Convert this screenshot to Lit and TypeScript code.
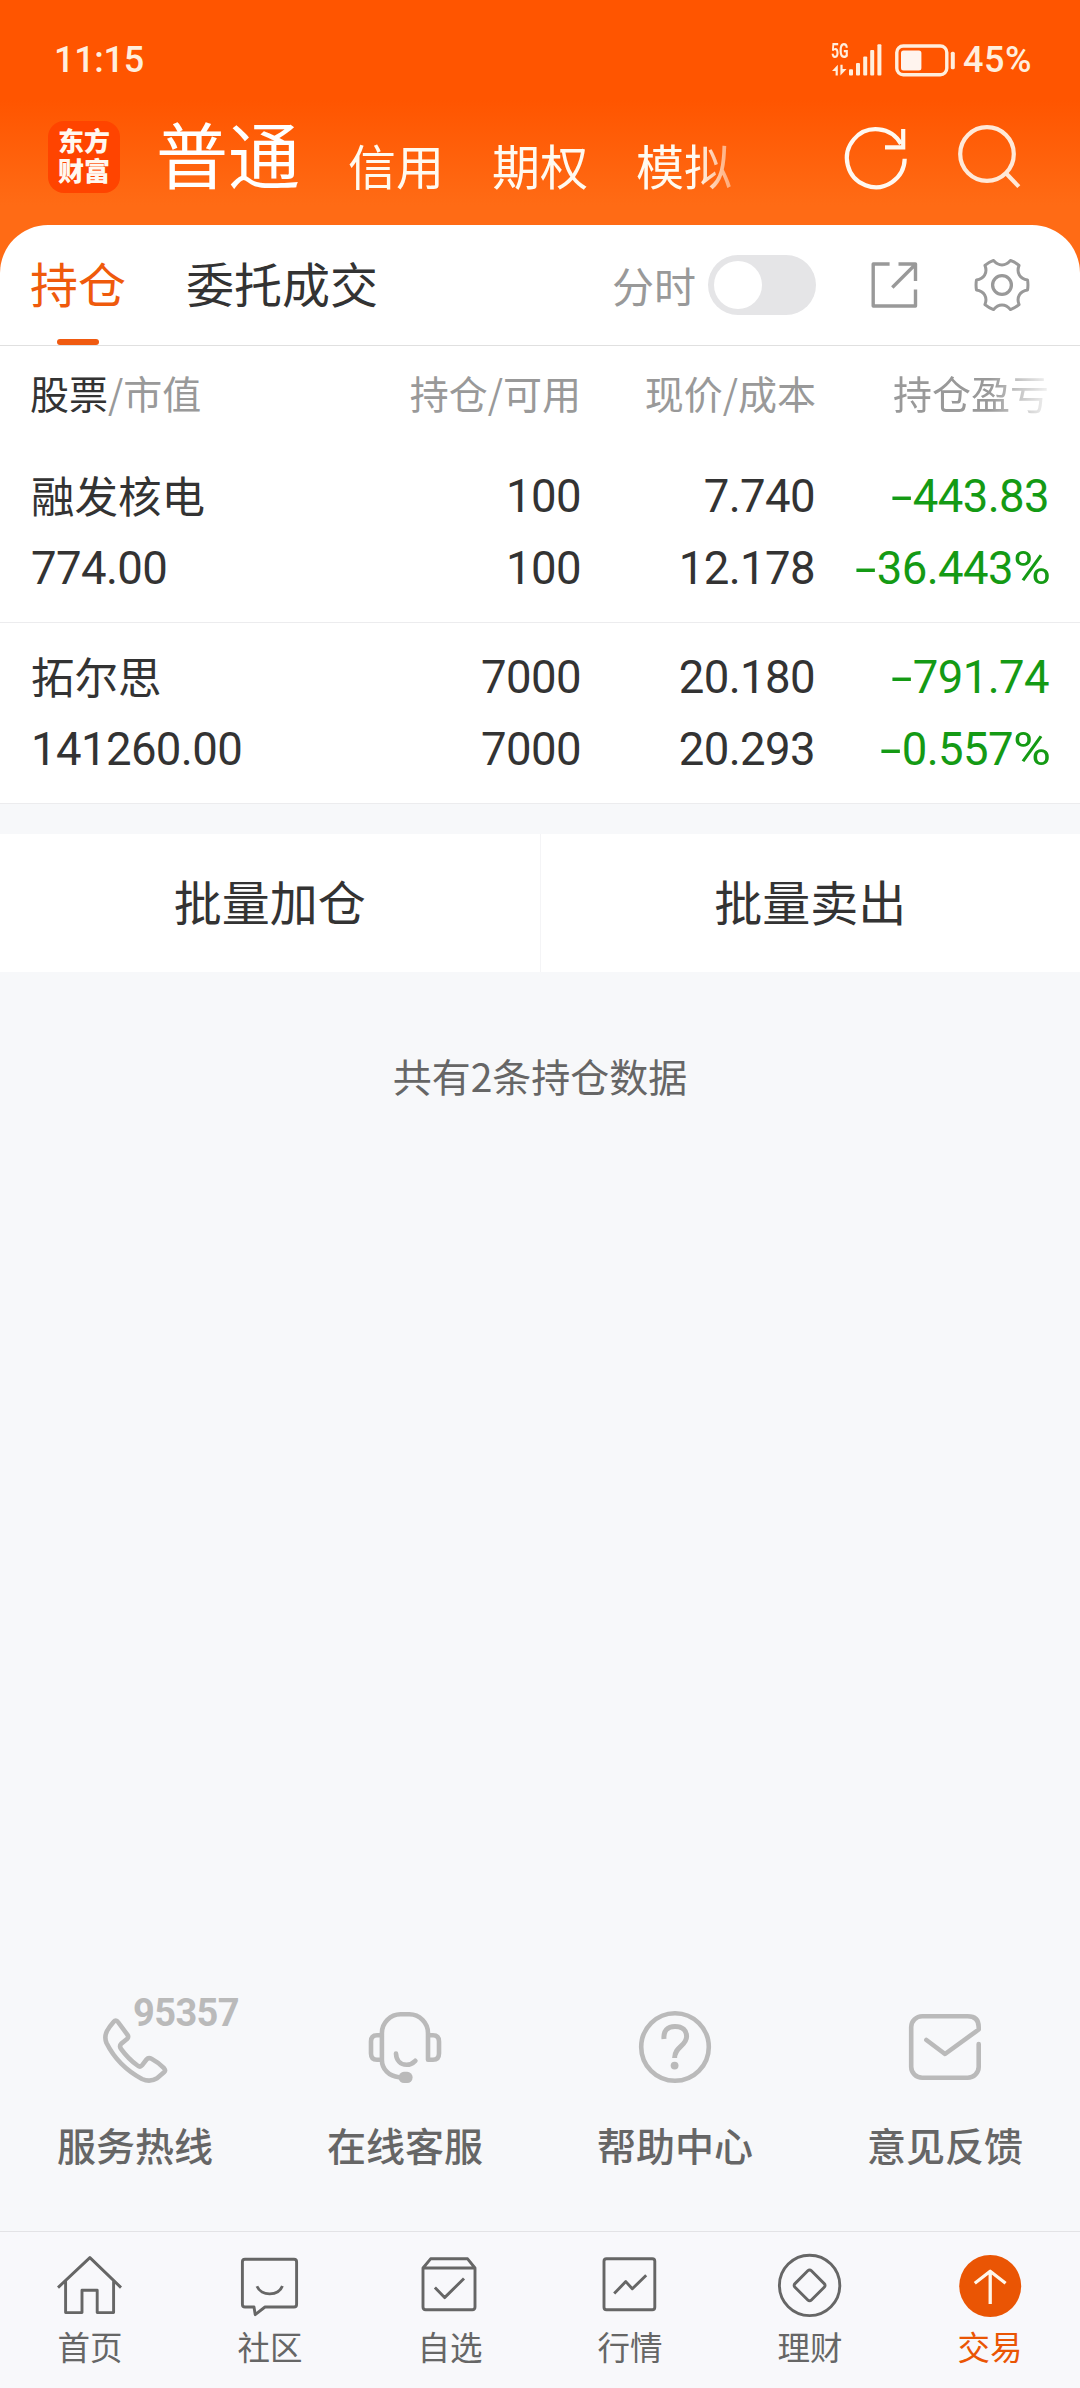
import { LitElement, html, css, svg, TemplateResult } from "lit";
import { customElement, property } from "lit/decorators.js";

interface Holding {
  name: string;
  value: string;
  held: string;
  available: string;
  price: string;
  cost: string;
  profit: string;
  rate: string;
}

const HOLDINGS: Holding[] = [
  { name: "融发核电", value: "774.00", held: "100", available: "100", price: "7.740", cost: "12.178", profit: "-443.83", rate: "-36.443%" },
  { name: "拓尔思", value: "141260.00", held: "7000", available: "7000", price: "20.180", cost: "20.293", profit: "-791.74", rate: "-0.557%" },
];

/** Six-lobed gear outline around a centre point. */
function gearPath(cx: number, cy: number): string {
  const at = (deg: number, r: number) => {
    const a = (deg * Math.PI) / 180;
    return `${(cx + r * Math.cos(a)).toFixed(2)} ${(cy + r * Math.sin(a)).toFixed(2)}`;
  };
  let d = `M${at(-11, 26)}`;
  for (let k = 0; k < 6; k++) {
    const a = k * 60;
    d += `Q${at(a, 26.4)} ${at(a + 11, 26)}`;
    d += `C${at(a + 19, 18.8)} ${at(a + 41, 18.8)} ${at(a + 49, 26)}`;
  }
  return d + "Z";
}

const icons = {
  signal: html`<svg width="54" height="36" viewBox="830 41 54 36" fill="currentColor">
    <path d="M837.8 63.7V74.5H835.6V70H832ZM840.4 74.5V63.7H842.6V68H846.6Z"/>
    <rect x="849" y="68.3" width="4" height="6.2" rx="1"/>
    <rect x="856" y="62" width="4" height="12.5" rx="1"/>
    <rect x="863.2" y="55.4" width="4" height="19.1" rx="1"/>
    <rect x="870.2" y="49" width="4" height="25.5" rx="1"/>
    <rect x="877.4" y="43.3" width="4" height="31.2" rx="1"/>
  </svg>`,
  battery: html`<svg width="64" height="36" viewBox="892 41 64 36" fill="none" stroke="currentColor">
    <rect x="895.8" y="45" width="50" height="28.8" rx="6.5" stroke-width="3.4"/>
    <rect x="900" y="49.5" width="20.4" height="20" rx="2.5" fill="#fff4ee" stroke="none"/>
    <rect x="949.8" y="50.7" width="4" height="17.6" rx="1.6" fill="currentColor" stroke="none"/>
  </svg>`,
  refresh: html`<svg width="72" height="72" viewBox="840 122 72 72" fill="none" stroke="#fff8f0" stroke-width="4.2">
    <path d="M904.7 158.8A28.9 29 0 1 1 901 144"/><path d="M903.2 129V147.3H885"/>
  </svg>`,
  search: html`<svg width="72" height="72" viewBox="953 122 72 72" fill="none" stroke="#ffe9d8" stroke-width="4.2">
    <circle cx="987" cy="154" r="26.8"/><path d="M1006 173.3 1018.8 186.6"/>
  </svg>`,
  share: html`<svg width="54" height="54" viewBox="867 258 54 54" fill="none" stroke="#999" stroke-width="3.4" stroke-linejoin="round">
    <path d="M889.6 264H873.2V306H915.5V289.5M898.5 264H915.5V281M892.3 287.5 914.8 265"/>
  </svg>`,
  gear: html`<svg width="60" height="60" viewBox="972.1 255.3 60 60" fill="none" stroke="#999" stroke-width="3" stroke-linejoin="round">
    <path d=${gearPath(1002.1, 285.3)}/><circle cx="1002.1" cy="285.3" r="9.4" stroke-width="3.3"/>
  </svg>`,
};

const service = (x: number, shapes: TemplateResult) => html`<svg width="80" height="80" viewBox="${x} 2007 80 80" fill="none"
  stroke="#bababa" stroke-width="4.6" stroke-linejoin="round" stroke-linecap="round">${shapes}</svg>`;

const SERVICES = [
  { label: "服务热线", badge: "95357", icon: service(95, svg`<path d="M113.5 2022Q116 2019 118 2022L127.5 2034.8Q129 2037 127 2039L121.3 2043.6Q119 2046 121 2048.8Q128 2058.5 137.5 2065.5Q140.2 2067.6 142 2065.4L146.5 2059.5Q148.5 2057 151.5 2058.8Q158.5 2062.5 164 2068.2Q166 2070.5 164 2072.3L157 2078.3Q150 2082.6 142 2079Q118 2066 106.5 2043Q104 2037 107 2031Q109.5 2026.5 113.5 2022Z"/>` as TemplateResult) },
  { label: "在线客服", badge: "", icon: service(365, svg`<path d="M399 2077.2C389 2076.5 381.9 2069 381.9 2060V2033A18.7 18.7 0 0 1 400.6 2014.3H409.3A18.7 18.7 0 0 1 428 2033V2059.7H433Q439 2059.7 439 2053.5V2041.5Q439 2035.3 433 2035.3H428M381.9 2035.3H377Q371 2035.3 371 2041.5V2053.5Q371 2059.7 377 2059.7H381.9M396 2053.6C396.3 2060.5 400.5 2064.8 406.5 2064.8Q411.5 2064.8 415.3 2060.8"/><rect x="398.6" y="2071.8" width="14" height="11.2" rx="5.4" fill="#bababa" stroke="none"/>` as TemplateResult) },
  { label: "帮助中心", badge: "", icon: service(635, svg`<circle cx="675" cy="2047" r="33.8"/><path stroke-linecap="butt" stroke-width="5" d="M664 2039C663.2 2031 667.5 2026.4 675 2026.4C682.5 2026.4 686.6 2030.5 686.6 2036.5C686.6 2046 674.6 2046.5 674.6 2058"/><circle cx="674.6" cy="2065.6" r="3.9" fill="#bababa" stroke="none"/>` as TemplateResult) },
  { label: "意见反馈", badge: "", icon: service(905, svg`<path d="M978.7 2044V2067A11 11 0 0 1 967.7 2077.8H922.2A11 11 0 0 1 911.2 2067V2027A11 11 0 0 1 922.2 2016.2H967.7Q978.7 2016.2 978.7 2027V2029.5L945 2054L926.4 2040"/>` as TemplateResult) },
];

const nav = (x: number, shapes: TemplateResult) => html`<svg width="70" height="70" viewBox="${x} 2250 70 70" fill="none"
  stroke="#666" stroke-width="2.9" stroke-linejoin="round">${shapes}</svg>`;

const NAV = [
  { label: "首页", active: false, icon: nav(55, svg`<path d="M58 2287.6 89.9 2257.6 121 2287.6M65.6 2281V2312.6H82V2290.3H97.2V2312.6H113.6V2281"/>` as TemplateResult) },
  { label: "社区", active: false, icon: nav(235, svg`<path d="M245 2259.3H294Q296.6 2259.3 296.6 2262V2304.4Q296.6 2307 294 2307H265L255.2 2314.6 254 2307H245Q242.4 2307 242.4 2304.4V2262Q242.4 2259.3 245 2259.3Z"/><path d="M257 2286.3C261 2296.4 278.4 2296.4 282.4 2286"/>` as TemplateResult) },
  { label: "自选", active: false, icon: nav(415, svg`<path d="M423 2268 430.6 2258.8H467.6L475 2268V2307Q475 2309.7 472.3 2309.7H425.7Q423 2309.7 423 2307ZH475M434.9 2287.6 444.6 2297.6 464 2278.5"/>` as TemplateResult) },
  { label: "行情", active: false, icon: nav(595, svg`<rect x="604" y="2258.8" width="50.8" height="50.9" rx="2.5"/><path d="M614.2 2293.5 625.8 2281.6 632.3 2288.8 646.2 2275.3"/>` as TemplateResult) },
  { label: "理财", active: false, icon: nav(775, svg`<circle cx="809.6" cy="2285.4" r="30.2"/><path d="M807.8 2270.8Q809.6 2269 811.4 2270.8L824.2 2283.6Q826 2285.4 824.2 2287.2L811.4 2300Q809.6 2301.8 807.8 2300L795 2287.2Q793.2 2285.4 795 2283.6Z"/>` as TemplateResult) },
  { label: "交易", active: true, icon: nav(955, svg`<circle cx="990.2" cy="2286" r="31" fill="#ea5504" stroke="none"/><path stroke="#fff6ea" stroke-width="3.3" d="M990.2 2304V2271.5M974.8 2283.3 990.2 2271.3 1005.6 2283.3"/>` as TemplateResult) },
];

@customElement("status-bar")
class StatusBar extends LitElement {
  static styles = css`
    :host { display: flex; align-items: center; justify-content: space-between; height: 118px; padding: 1px 48px 0 54px;
      box-sizing: border-box; color: #ffeedd; font: 500 36px/117px Roboto, "Liberation Sans", sans-serif; }
    svg { display: block; }
    .right { display: flex; align-items: center; }
    .cell { display: flex; align-items: center; position: relative; margin-right: 9px; }
    .net { position: absolute; left: 1px; top: 1px; font: 700 19.5px/18px Roboto, sans-serif; transform: scaleX(0.72); transform-origin: 0 0; }
    .battery { display: flex; margin-right: 6px; }
    .time, .percent { padding-top: 1px; }
    .time { letter-spacing: -0.3px; }
    .percent { letter-spacing: 0.5px; }
  `;
  render() {
    return html`<span class="time">11:15</span>
      <div class="right">
        <span class="cell">${icons.signal}<span class="net">5G</span></span>
        <span class="battery">${icons.battery}</span>
        <span class="percent">45%</span>
      </div>`;
  }
}

@customElement("signed-number")
class SignedNumber extends LitElement {
  @property() value = "";
  static styles = css`
    :host { display: inline; }
    .minus { display: inline-block; width: 21.5px; text-align: left; }
    .percent { display: inline-block; width: 36px; text-align: left; }
    .bar { display: inline-block; transform: scaleX(1.7); transform-origin: 0 50%; }
    .wide { display: inline-block; transform: scaleX(1.14); transform-origin: 0 50%; }
  `;
  render() {
    const percent = this.value.endsWith("%");
    const digits = this.value.slice(1, percent ? -1 : undefined);
    return html`<span class="minus"><span class="bar">-</span></span>${digits}${percent ? html`<span class="percent"><span class="wide">%</span></span>` : ""}`;
  }
}

@customElement("app-root")
class AppRoot extends LitElement {
  static styles = css`
    :host { display: block; }
    svg { display: block; flex: none; }
    .screen { display: flex; flex-direction: column; width: 1080px; height: 2388px; overflow: hidden; color: #333;
      font-family: "Noto Sans CJK SC", sans-serif;
      background: #f7f8fa linear-gradient(#ff5500 0, #ff5500 100px, #ff6b15 205px, #ff6b15 280px) 0 0 / 100% 280px no-repeat; }
    .head { display: flex; align-items: center; height: 107px; padding: 0 55px 29px 48px; box-sizing: border-box; }
    .logo { width: 72px; height: 72px; border-radius: 16px; padding: 4px 10px 8px; box-sizing: border-box;
      background: #ff4400; color: #fff8f0; font-size: 26px; font-weight: 900; line-height: 30px; }
    .accounts { display: flex; align-items: flex-start; gap: 48px; width: 604px; height: 84px; margin-left: 36px; color: #fffaf0; font-size: 48px; line-height: 72px; white-space: nowrap;
      margin-top: 2px;
      -webkit-mask-image: linear-gradient(90deg, #000 540px, transparent 604px); mask-image: linear-gradient(90deg, #000 540px, transparent 604px); }
    .account { padding-top: 12px; }
    .account.current { padding-top: 0; font-size: 72px; color: #fff; }
    .tools { display: flex; margin-left: auto; margin-top: 2px; gap: 41px; }
    .sheet { background: #fff; border-radius: 48px 48px 0 0; }
    .tabs { display: flex; align-items: center; height: 121px; box-sizing: border-box; padding: 0 48px 0 30px; border-bottom: 1px solid #e0e0e0; }
    .tab { position: relative; height: 120px; font-size: 48px; line-height: 115px; margin-right: 60px; }
    .tab.on { color: #ef5a0c; }
    .tab.on::after { content: ""; position: absolute; left: 27px; bottom: 0; width: 42px; height: 6px; border-radius: 3px; background: #f05a10; }
    .minute { display: flex; align-items: center; margin-left: auto; color: #999; font-size: 42px; line-height: 116px; }
    .switch { width: 108px; height: 60px; margin-left: 12px; border-radius: 30px; background: #e5e5e7; padding: 6px; box-sizing: border-box; }
    .knob { width: 48px; height: 48px; border-radius: 50%; background: #fff; }
    .share { margin-left: 51px; }
    .gear { margin-left: 51px; }
    .row { display: grid; grid-template-columns: 271px 280px 235px 233px; padding: 0 31px 0 30px; }
    .row > :not(:first-child) { text-align: right; }
    .cols { height: 96px; font-size: 39px; line-height: 92px; color: #999; }
    .cols .strong { color: #333; }
    .fade { -webkit-mask-image: linear-gradient(90deg, #000 173px, rgba(0,0,0,.12) 233px); mask-image: linear-gradient(90deg, #000 173px, rgba(0,0,0,.12) 233px); }
    .row.holding { grid-template-columns: 270px 280px 234px 234px; border-bottom: 1px solid #ececee; padding: 19px 31px 17px 31px; font: 400 45.5px/72px Roboto, "Liberation Sans", sans-serif; letter-spacing: -0.6px; }
    .name { font-family: "Noto Sans CJK SC", sans-serif; font-size: 43.5px; line-height: 67px; height: 72px; letter-spacing: 0; }
    .down { color: #149a14; }
    .batch { display: flex; height: 138px; margin-top: 30px; background: #fff; }
    .action { flex: 1; text-align: center; font-size: 48px; line-height: 132px; }
    .action:first-child { border-right: 1px solid #f4f4f6; }
    .summary { margin-top: 67px; text-align: center; color: #666; font-size: 39px; line-height: 73px; }
    .services { display: grid; grid-template-columns: repeat(4, 270px); margin-top: auto; padding-bottom: 57px; }
    .service { display: flex; flex-direction: column; align-items: center; position: relative; color: #666; font-size: 39px; font-weight: 500; line-height: 60px; gap: 27px; }
    .badge { position: absolute; left: 133px; top: -14px; color: #bababa; font: 700 38px/40px Roboto, "Liberation Sans", sans-serif; letter-spacing: -0.6px; }
    .nav { display: grid; grid-template-columns: repeat(6, 180px); height: 157px; box-sizing: border-box; padding-top: 18px; border-top: 1px solid #e3e3e6; background: #f8f8fb; }
    .item { display: flex; flex-direction: column; align-items: center; color: #666; font-size: 32.5px; line-height: 40px; gap: 6px; }
    .item.active { color: #ea5504; }
  `;

  private holding(h: Holding) {
    return html`<div class="row holding">
      <div><div class="name">${h.name}</div><div>${h.value}</div></div>
      <div><div>${h.held}</div><div>${h.available}</div></div>
      <div><div>${h.price}</div><div>${h.cost}</div></div>
      <div class="down"><div><signed-number .value=${h.profit}></signed-number></div><div><signed-number .value=${h.rate}></signed-number></div></div>
    </div>`;
  }

  render() {
    return html`<div class="screen">
      <status-bar></status-bar>
      <header class="head">
        <div class="logo">东方财富</div>
        <div class="accounts">
          <span class="account current">普通</span><span class="account">信用</span><span class="account">期权</span><span class="account">模拟</span>
        </div>
        <div class="tools">${icons.refresh}${icons.search}</div>
      </header>
      <main class="sheet">
        <div class="tabs">
          <div class="tab on">持仓</div>
          <div class="tab">委托成交</div>
          <div class="minute">分时<span class="switch"><div class="knob"></div></span></div>
          <span class="share">${icons.share}</span>
          <span class="gear">${icons.gear}</span>
        </div>
        <div class="row cols">
          <div><span class="strong">股票</span>/市值</div>
          <div>持仓/可用</div>
          <div>现价/成本</div>
          <div class="fade">持仓盈亏</div>
        </div>
        ${HOLDINGS.map((h) => this.holding(h))}
      </main>
      <div class="batch"><div class="action">批量加仓</div><div class="action">批量卖出</div></div>
      <div class="summary">共有2条持仓数据</div>
      <section class="services">
        ${SERVICES.map((s) => html`<div class="service">${s.icon}${s.badge ? html`<span class="badge">${s.badge}</span>` : ""}<span>${s.label}</span></div>`)}
      </section>
      <nav class="nav">
        ${NAV.map((n) => html`<div class="item ${n.active ? "active" : ""}">${n.icon}<span>${n.label}</span></div>`)}
      </nav>
    </div>`;
  }
}
